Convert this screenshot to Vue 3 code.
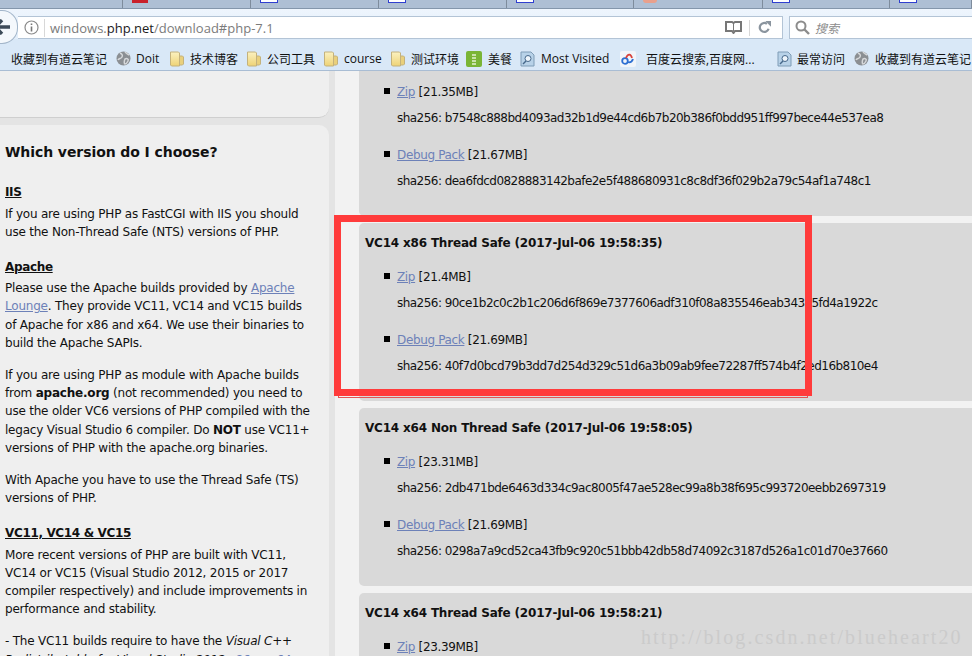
<template>
  <div class="page">
    <!-- browser tabs -->
    <div class="tabs">
      <div v-for="tab in tabs" :key="tab.w" class="tab" :style="{ width: tab.w + 'px' }">
        <span class="tab-icon" :class="tab.kind"></span>
      </div>
    </div>

    <!-- nav bar -->
    <div class="navbar">
      <div class="back">
        <svg width="16" height="16" viewBox="0 0 16 16"><path d="M8 1 1.500 8 8 15M3 8h13" fill="none" stroke="#3c4a58" stroke-width="3.400"/></svg>
      </div>
      <div class="urlbar">
        <svg class="info" width="15" height="15" viewBox="0 0 15 15"><circle cx="7.500" cy="7.500" r="6.500" fill="none" stroke="#8a8a8a" stroke-width="1.200"/><path d="M7.500 6.500v5M7.500 3.500v1.500" stroke="#777" stroke-width="1.600"/></svg>
        <span class="url"><span class="dim">windows.</span>php.net<span class="dim">/download#php-7.1</span></span>
        <svg class="reader" width="17" height="13" viewBox="0 0 17 13"><path d="M1 1h6l1.500 1L10 1h6v9h-6l-1.500 2L7 10H1z" fill="#fff" stroke="#777" stroke-width="2"/><path d="M8.500 2v8" stroke="#777"/></svg>
        <span class="url-sep"></span>
        <svg class="reload" width="13" height="13" viewBox="0 0 16 16"><path d="M13 9.500A5.500 5.500 0 1 1 11 3.500" fill="none" stroke="#8a949e" stroke-width="2.800"/><path d="M9 0h7v7z" fill="#8a949e"/></svg>
      </div>
      <div class="searchbar">
        <svg width="15" height="15" viewBox="0 0 15 15"><circle cx="6" cy="6" r="4.500" fill="none" stroke="#8c8c8c" stroke-width="2"/><path d="M9.500 9.500 14 14" stroke="#8c8c8c" stroke-width="2.400"/></svg>
        <span>搜索</span>
      </div>
    </div>

    <!-- bookmarks -->
    <div class="bookmarks">
      <div v-for="b in bookmarks" :key="b.label + b.w" class="bookmark" :style="{ width: b.w + 'px', gap: (b.gap || 6) + 'px' }">
        <svg v-if="b.icon === 'globe'" width="15" height="15" viewBox="0 0 15 15"><circle cx="7.500" cy="7.500" r="7" fill="#8b8f93"/><path d="M4 2c2 1 3 2 2 4s-3 1-4 3M9 8c2-1 4 0 3 2s-2 3-3 3-1-3 0-5zM9 1c1 1 2 2 4 3" fill="none" stroke="#d6d8da" stroke-width="1.500"/></svg>
        <svg v-else-if="b.icon === 'folder'" width="15" height="16" viewBox="0 0 15 16">
          <defs><linearGradient id="folderFill" x1="0" y1="0" x2="0" y2="1"><stop offset="0" stop-color="#fbf1c0"/><stop offset="1" stop-color="#eed376"/></linearGradient></defs>
          <path d="M1.500 1h8l1 1v13h-8l-1-1z" fill="url(#folderFill)" stroke="#c4b27c"/><path d="M10.500 5h3l1 1v7l-1 1h-3z" fill="#e9d07c" stroke="#c4b27c"/>
        </svg>
        <svg v-else-if="b.icon === 'green'" width="16" height="16" viewBox="0 0 16 16"><rect width="16" height="16" rx="2" fill="#7ab536"/><path d="M6 4h4M6 7h4M6 10h4M6 13h4" stroke="#e4f1d2" stroke-width="1.500"/></svg>
        <svg v-else-if="b.icon === 'page'" width="15" height="16" viewBox="0 0 15 16"><path d="M1 1h10l3 3v11H1z" fill="#b8d2e8" stroke="#7f9cb6"/><circle cx="8" cy="7.500" r="3" fill="#eef5fb" stroke="#46688a"/><path d="m6 10-3 3" stroke="#46688a" stroke-width="1.500"/></svg>
        <svg v-else-if="b.icon === 'baidu'" width="16" height="16" viewBox="0 0 16 16"><rect width="16" height="16" rx="2" fill="#f1f5fa"/><circle cx="5" cy="10" r="2.800" fill="none" stroke="#2d6fd2" stroke-width="1.800"/><path d="M6 7c2-5 5-4 6 0" fill="none" stroke="#d8423c" stroke-width="1.800"/><path d="M7 11c3 1 5 0 6-3" fill="none" stroke="#2d6fd2" stroke-width="1.800"/></svg>
        <span :class="{ 'no-icon': !b.icon }">{{ b.label }}</span>
      </div>
    </div>

    <div class="content">
      <!-- sidebar -->
      <aside class="sidebar">
        <div class="side-card top"></div>
        <div class="side-card">
          <h3>Which version do I choose?</h3>
          <h4>IIS</h4>
          <p>If you are using PHP as FastCGI with IIS you should<br>use the Non-Thread Safe (NTS) versions of PHP.</p>
          <h4>Apache</h4>
          <p>Please use the Apache builds provided by <a>Apache</a><br><a>Lounge</a>. They provide VC11, VC14 and VC15 builds<br>of Apache for x86 and x64. We use their binaries to<br>build the Apache SAPIs.</p>
          <p>If you are using PHP as module with Apache builds<br>from <b>apache.org</b> (not recommended) you need to<br>use the older VC6 versions of PHP compiled with the<br>legacy Visual Studio 6 compiler. Do <b>NOT</b> use VC11+<br>versions of PHP with the apache.org binaries.</p>
          <p>With Apache you have to use the Thread Safe (TS)<br>versions of PHP.</p>
          <h4>VC11, VC14 &amp; VC15</h4>
          <p>More recent versions of PHP are built with VC11,<br>VC14 or VC15 (Visual Studio 2012, 2015 or 2017<br>compiler respectively) and include improvements in<br>performance and stability.</p>
          <p>- The VC11 builds require to have the <i>Visual C++</i><br><i>Redistributable for Visual Studio 2012</i> <a>x86</a> or <a>x64</a></p>
        </div>
      </aside>

      <!-- downloads -->
      <main class="downloads">
        <section v-for="(rel, i) in releases" :key="i" class="release" :class="{ first: i === 0 }">
          <h3 v-if="rel.title">{{ rel.title }}</h3>
          <ul>
            <li v-for="f in rel.files" :key="f.name">
              <div class="file"><a>{{ f.name }}</a> [{{ f.size }}]</div>
              <div class="sha">sha256: {{ f.sha }}</div>
            </li>
          </ul>
        </section>
      </main>
    </div>

    <!-- annotation drawn over the page -->
    <div class="mark-thin"></div>
    <div class="mark"></div>
    <div class="watermark">http://blog.csdn.net/blueheart20</div>
  </div>
</template>

<script setup>
const tabs = [
  { w: 123, kind: '' },
  { w: 128, kind: 'red' },
  { w: 128, kind: 'blue' },
  { w: 128, kind: 'blue' },
  { w: 127, kind: 'blue' },
  { w: 129, kind: 'orange' },
  { w: 127, kind: 'blue' },
  { w: 82, kind: 'blue' }
]

const bookmarks = [
  { label: '收藏到有道云笔记', w: 116 },
  { label: 'Doit', icon: 'globe', w: 53, gap: 5 },
  { label: '技术博客', icon: 'folder', w: 77 },
  { label: '公司工具', icon: 'folder', w: 77 },
  { label: 'course', icon: 'folder', w: 67 },
  { label: '测试环境', icon: 'folder', w: 76 },
  { label: '美餐', icon: 'green', w: 54 },
  { label: 'Most Visited', icon: 'page', w: 100 },
  { label: '百度云搜索,百度网...', icon: 'baidu', w: 157, gap: 10 },
  { label: '最常访问', icon: 'page', w: 77, gap: 5 },
  { label: '收藏到有道云笔记', icon: 'globe', w: 120 }
]

const releases = [
  {
    files: [
      { name: 'Zip', size: '21.35MB', sha: 'b7548c888bd4093ad32b1d9e44cd6b7b20b386f0bdd951ff997bece44e537ea8' },
      { name: 'Debug Pack', size: '21.67MB', sha: 'dea6fdcd0828883142bafe2e5f488680931c8c8df36f029b2a79c54af1a748c1' }
    ]
  },
  {
    title: 'VC14 x86 Thread Safe (2017-Jul-06 19:58:35)',
    files: [
      { name: 'Zip', size: '21.4MB', sha: '90ce1b2c0c2b1c206d6f869e7377606adf310f08a835546eab343a5fd4a1922c' },
      { name: 'Debug Pack', size: '21.69MB', sha: '40f7d0bcd79b3dd7d254d329c51d6a3b09ab9fee72287ff574b4f2ed16b810e4' }
    ]
  },
  {
    title: 'VC14 x64 Non Thread Safe (2017-Jul-06 19:58:05)',
    files: [
      { name: 'Zip', size: '23.31MB', sha: '2db471bde6463d334c9ac8005f47ae528ec99a8b38f695c993720eebb2697319' },
      { name: 'Debug Pack', size: '21.69MB', sha: '0298a7a9cd52ca43fb9c920c51bbb42db58d74092c3187d526a1c01d70e37660' }
    ]
  },
  {
    title: 'VC14 x64 Thread Safe (2017-Jul-06 19:58:21)',
    files: [{ name: 'Zip', size: '23.39MB', sha: '' }]
  }
]
</script>

<style scoped>
.page {
  position: relative;
  width: 972px;
  height: 656px;
  overflow: hidden;
  display: flex;
  flex-direction: column;
  background: #e4e4e4;
  color: #111;
  font-family: "DejaVu Sans", "Noto Sans CJK SC", sans-serif;
  font-size: 12px;
}

/* browser chrome */
.tabs {
  flex: none;
  display: flex;
  height: 8px;
  background: #aebfd4;
  border-bottom: 1px solid #8496ab;
  overflow: hidden;
}
.tab {
  flex: none;
  border-right: 1px solid #7e8c9c;
  box-sizing: border-box;
  padding-left: 9px;
}
.tab-icon {
  display: block;
  width: 16px;
  height: 3px;
}
.tab-icon.red { background: #c9202a; }
.tab-icon.blue { background: #fff; border: 1px solid #2f3fd0; border-top: 0; height: 2px; }
.tab-icon.orange { background: #e9a08c; width: 14px; border-radius: 0 0 7px 7px; }

.navbar {
  flex: none;
  display: flex;
  align-items: flex-end;
  height: 30px;
  background: linear-gradient(#eef5fd, #e2eefa);
}
.back {
  flex: none;
  position: relative;
  z-index: 1;
  width: 17px;
  height: 32px;
  margin-bottom: -5px;
  display: flex;
  align-items: center;
  justify-content: flex-end;
  overflow: hidden;
  background: #f4f8fc;
  border: 1px solid #a2b5c9;
  border-left: 0;
  border-radius: 0 16px 16px 0;
}
.back svg {
  flex: none;
  margin-right: 7px;
}
.urlbar {
  flex: none;
  width: 765px;
  height: 23px;
  box-sizing: border-box;
  background: #fff;
  border: 1px solid #b3c4d6;
  border-left: 0;
  display: flex;
  align-items: center;
  padding-left: 6px;
}
.info { flex: none; }
.url {
  flex: 1;
  margin-left: 5px;
  padding-left: 5px;
  border-left: 1px solid #d8d8d8;
  color: #1a1a1a;
  font-family: "Open Sans", sans-serif;
  font-size: 13px;
  line-height: 18px;
}
.dim { color: #7b7b7b; }
.reader { margin-right: 7px; }
.url-sep { width: 1px; height: 16px; background: #d8d8d8; margin-right: 8px; }
.reload { margin-right: 11px; }
.searchbar {
  flex: none;
  width: 184px;
  height: 23px;
  margin-left: 6px;
  box-sizing: border-box;
  background: #fff;
  border: 1px solid #b3c4d6;
  border-right: 0;
  display: flex;
  align-items: center;
  gap: 5px;
  padding-left: 5px;
  color: #8c8c8c;
  font-style: italic;
}

.bookmarks {
  flex: none;
  display: flex;
  align-items: center;
  height: 32px;
  box-sizing: border-box;
  padding-top: 8px;
  background: #d9e8f7;
  border-bottom: 1px solid #a9bdd4;
  white-space: nowrap;
  overflow: hidden;
}
.bookmark {
  flex: none;
  display: flex;
  align-items: center;
  color: #111;
  font-family: "Open Sans", "Noto Sans CJK SC", sans-serif;
}
.bookmark svg { flex: none; }
.no-icon { padding-left: 11px; }

/* page */
.content {
  flex: 1;
  min-height: 0;
  display: flex;
  overflow: hidden;
}
.sidebar {
  flex: none;
  width: 335px;
  box-sizing: border-box;
  padding-right: 6px;
  display: flex;
  flex-direction: column;
  gap: 7px;
}
.side-card {
  background: #efefef;
  border-radius: 0 10px 10px 0;
  padding: 17px 30px 0 5px;
}
.side-card.top {
  height: 47px;
  padding: 0;
  flex: none;
  border-radius: 0 0 10px 0;
  border-bottom: 1px solid #cfcfcf;
  box-sizing: border-box;
}
.side-card h3 {
  margin: 0 0 21px;
  font-size: 14px;
  line-height: 20px;
  letter-spacing: -0.08px;
}
.side-card h4 {
  margin: 0;
  font-size: 12px;
  line-height: 19px;
  letter-spacing: -0.35px;
  text-decoration: underline;
}
.side-card p {
  margin: 0 0 13.600px;
  line-height: 18.300px;
  white-space: nowrap;
  letter-spacing: -0.21px;
}
.side-card p + h4 { margin-top: 16.500px; }
.side-card h4 + p { margin-top: 2.500px; }
a {
  color: #6d81b8;
  text-decoration: underline;
}

.downloads {
  flex: 1;
  min-width: 0;
  background: #f2f2f2;
  padding-left: 24px;
  display: flex;
  flex-direction: column;
  gap: 7px;
}
.release {
  flex: none;
  height: 178px;
  box-sizing: border-box;
  background: #d9d9d9;
  border-radius: 5px 0 0 5px;
  padding: 11px 0 0 6px;
}
.release.first {
  height: 145px;
  padding-top: 12px;
  border-radius: 0 0 0 5px;
}
.release h3 {
  margin: 0 0 16px;
  font-size: 12px;
  line-height: 18px;
  letter-spacing: -0.19px;
}
.release ul {
  margin: 0;
  padding: 0 0 0 32px;
  list-style: none;
}
.release li { margin-bottom: 18.500px; white-space: nowrap; }
.file { line-height: 18px; margin-bottom: 8px; letter-spacing: -0.35px; }
/* square bullet sits left of the text, larger than the native marker */
.file::before {
  content: "";
  display: inline-block;
  width: 6px;
  height: 6px;
  margin-left: -13px;
  margin-right: 7px;
  vertical-align: 2px;
  background: #000;
}
.sha { line-height: 18px; letter-spacing: -0.54px; }

/* annotation */
.mark {
  position: absolute;
  left: 334px;
  top: 215px;
  width: 478px;
  height: 181px;
  box-sizing: border-box;
  border: 7px solid #ff3b3b;
}
.mark-thin {
  position: absolute;
  left: 338px;
  top: 396px;
  width: 470px;
  height: 2px;
  box-sizing: border-box;
  border: 1px solid #e25555;
  border-top: 0;
}
.watermark {
  position: absolute;
  left: 641px;
  top: 626px;
  font-family: "Liberation Serif", serif;
  font-size: 20px;
  line-height: 22px;
  letter-spacing: 2.100px;
  color: #cbcbcb;
  white-space: nowrap;
}
</style>
